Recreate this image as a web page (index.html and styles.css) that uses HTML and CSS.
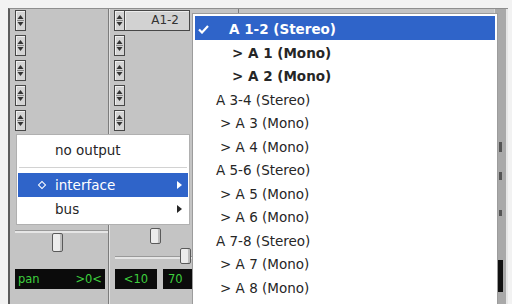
FILE: index.html
```html
<!DOCTYPE html>
<html>
<head>
<meta charset="utf-8">
<link rel="stylesheet" href="styles.css">
</head>
<body>
<div class="screen">
  <div class="mixer">
    <div class="strip s1">
      <div class="btns">
        <div class="ud"><svg width="7" height="15" viewBox="0 0 7 15"><path d="M0.5 6 L3.5 2 L6.5 6 Z M0.5 9 L3.5 13 L6.5 9 Z" fill="#333"/><path d="M0 7.5 H7" stroke="#888" stroke-width="1"/></svg></div>
        <div class="ud"><svg width="7" height="15" viewBox="0 0 7 15"><path d="M0.5 6 L3.5 2 L6.5 6 Z M0.5 9 L3.5 13 L6.5 9 Z" fill="#333"/><path d="M0 7.5 H7" stroke="#888" stroke-width="1"/></svg></div>
        <div class="ud"><svg width="7" height="15" viewBox="0 0 7 15"><path d="M0.5 6 L3.5 2 L6.5 6 Z M0.5 9 L3.5 13 L6.5 9 Z" fill="#333"/><path d="M0 7.5 H7" stroke="#888" stroke-width="1"/></svg></div>
        <div class="ud"><svg width="7" height="15" viewBox="0 0 7 15"><path d="M0.5 6 L3.5 2 L6.5 6 Z M0.5 9 L3.5 13 L6.5 9 Z" fill="#333"/><path d="M0 7.5 H7" stroke="#888" stroke-width="1"/></svg></div>
        <div class="ud"><svg width="7" height="15" viewBox="0 0 7 15"><path d="M0.5 6 L3.5 2 L6.5 6 Z M0.5 9 L3.5 13 L6.5 9 Z" fill="#333"/><path d="M0 7.5 H7" stroke="#888" stroke-width="1"/></svg></div>
      </div>
      <div class="bottom">
        <div class="faders">
          <div class="track t1"></div>
          <div class="thumb th-a"></div>
        </div>
        <div class="lcds">
          <div class="lcd wide"><span>pan</span><span>&gt;0&lt;</span></div>
        </div>
      </div>
    </div>
    <div class="strip s2">
      <div class="btns">
        <div class="toprow">
          <div class="ud"><svg width="7" height="15" viewBox="0 0 7 15"><path d="M0.5 6 L3.5 2 L6.5 6 Z M0.5 9 L3.5 13 L6.5 9 Z" fill="#333"/><path d="M0 7.5 H7" stroke="#888" stroke-width="1"/></svg></div>
          <div class="label">A1-2</div>
        </div>
        <div class="ud"><svg width="7" height="15" viewBox="0 0 7 15"><path d="M0.5 6 L3.5 2 L6.5 6 Z M0.5 9 L3.5 13 L6.5 9 Z" fill="#333"/><path d="M0 7.5 H7" stroke="#888" stroke-width="1"/></svg></div>
        <div class="ud"><svg width="7" height="15" viewBox="0 0 7 15"><path d="M0.5 6 L3.5 2 L6.5 6 Z M0.5 9 L3.5 13 L6.5 9 Z" fill="#333"/><path d="M0 7.5 H7" stroke="#888" stroke-width="1"/></svg></div>
        <div class="ud"><svg width="7" height="15" viewBox="0 0 7 15"><path d="M0.5 6 L3.5 2 L6.5 6 Z M0.5 9 L3.5 13 L6.5 9 Z" fill="#333"/><path d="M0 7.5 H7" stroke="#888" stroke-width="1"/></svg></div>
        <div class="ud"><svg width="7" height="15" viewBox="0 0 7 15"><path d="M0.5 6 L3.5 2 L6.5 6 Z M0.5 9 L3.5 13 L6.5 9 Z" fill="#333"/><path d="M0 7.5 H7" stroke="#888" stroke-width="1"/></svg></div>
      </div>
      <div class="bottom">
        <div class="faders">
          <div class="track t2"></div>
          <div class="thumb th-b"></div>
          <div class="thumb th-c"></div>
        </div>
        <div class="lcds">
          <div class="lcd small"><span>&lt;10</span></div>
          <div class="lcd small left"><span>70</span></div>
        </div>
      </div>
    </div>
    <div class="strip s3"></div>
    <div class="vbar">
      <div class="mk m-a"></div>
      <div class="mk m-b"></div>
      <div class="mk m-c"></div>
      <div class="mk m-d"></div>
    </div>
  </div>

  <div class="menu m1">
    <div class="mi"><span class="mark"></span><span class="txt">no output</span></div>
    <div class="sep"></div>
    <div class="mi hl"><span class="mark"><span class="dia"></span></span><span class="txt">interface</span><span class="arr"></span></div>
    <div class="mi"><span class="mark"></span><span class="txt">bus</span><span class="arr"></span></div>
  </div>

  <div class="menu m2">
    <div class="row hl bold sel"><span class="chk"><svg width="11" height="9" viewBox="0 0 11 9"><path d="M1 4.5 L4 7.5 L10 1" fill="none" stroke="#fff" stroke-width="2.2"/></svg></span>A 1-2 (Stereo)</div>
    <div class="row bold mono">&gt; A 1 (Mono)</div>
    <div class="row bold mono">&gt; A 2 (Mono)</div>
    <div class="row st">A 3-4 (Stereo)</div>
    <div class="row mn">&gt; A 3 (Mono)</div>
    <div class="row mn">&gt; A 4 (Mono)</div>
    <div class="row st">A 5-6 (Stereo)</div>
    <div class="row mn">&gt; A 5 (Mono)</div>
    <div class="row mn">&gt; A 6 (Mono)</div>
    <div class="row st">A 7-8 (Stereo)</div>
    <div class="row mn">&gt; A 7 (Mono)</div>
    <div class="row mn">&gt; A 8 (Mono)</div>
  </div>
</div>
</body>
</html>
```

FILE: styles.css
```css
html, body {
  margin: 0;
  padding: 0;
}
body {
  width: 512px;
  height: 304px;
  overflow: hidden;
  background: #f2f2f2;
  font-family: "DejaVu Sans", "Liberation Sans", sans-serif;
}
.screen {
  position: relative;
  width: 512px;
  height: 304px;
  box-sizing: border-box;
  padding: 8px 4px 0 8px;
}
.mixer {
  display: flex;
  height: 296px;
  background: #c4c4c4;
  border-left: 2px solid #5c5c5c;
  border-top: 1px solid #8e8e8e;
}
.strip {
  display: flex;
  flex-direction: column;
  box-sizing: border-box;
  height: 100%;
}
.s1 {
  width: 99px;
  border-right: 1px solid #7c7c7c;
}
.s2 {
  width: 130px;
  border-left: 1px solid #e2e2e2;
  border-right: 1px solid #7c7c7c;
}
.s3 {
  flex: 1;
}
.btns {
  display: flex;
  flex-direction: column;
  align-items: flex-start;
  gap: 4px;
  padding: 1px 0 0 5px;
}
.s2 .btns {
  padding-left: 4px;
}
.ud {
  width: 11px;
  height: 21px;
  box-sizing: border-box;
  border: 1px solid #474747;
  background: #d4d4d4;
  box-shadow: inset 1px 1px 0 #f0f0f0;
  display: flex;
  align-items: center;
  justify-content: center;
}
.toprow {
  display: flex;
}
.label {
  width: 65px;
  height: 21px;
  box-sizing: border-box;
  border: 1px solid #474747;
  border-left: none;
  background: #d2d2d2;
  box-shadow: inset 1px 1px 0 #ececec;
  font-size: 12px;
  line-height: 19px;
  color: #333;
  text-align: right;
  padding-right: 10px;
}
.bottom {
  margin-top: auto;
  padding: 0 0 16px 5px;
}
.faders {
  position: relative;
  height: 40px;
  margin-bottom: 2px;
}
.track {
  position: absolute;
  left: 0;
  right: 0;
  height: 2px;
  background: #e6e6e6;
  border-top: 1px solid #9a9a9a;
}
.t1 { top: 3px; }
.t2 { top: 29px; right: -4px; }
.thumb {
  position: absolute;
  width: 11px;
  box-sizing: border-box;
  border: 1px solid #5a5a5a;
  border-radius: 2px;
  background: #ececec;
  box-shadow: inset -2px 0 0 #bdbdbd;
}
.th-a { left: 37px; top: 6px; height: 19px; }
.th-b { left: 35px; top: 1px; height: 16px; }
.th-c { left: 65px; top: 21px; height: 16px; }
.lcds {
  display: flex;
  gap: 6px;
}
.lcd {
  height: 20px;
  box-sizing: border-box;
  background: #0b0b0b;
  color: #3ecf3e;
  font-size: 11.5px;
  line-height: 20px;
  display: flex;
  justify-content: space-between;
  padding: 0 3px;
}
.lcd.wide { width: 90px; }
.lcd.small { width: 42px; justify-content: center; }
.lcd.small.left { justify-content: flex-start; padding-left: 5px; }
.vbar {
  width: 11px;
  display: flex;
  flex-direction: column;
  align-items: center;
  background: #a9a9a9;
  border-left: 1px solid #d6d6d6;
  border-right: 2px solid #e6e6e6;
}
.mk {
  width: 3px;
  background: #555;
}
.m-a { margin-top: 133px; height: 10px; }
.m-b { margin-top: 20px; height: 8px; }
.m-c { margin-top: 30px; height: 6px; }
.m-d { margin-top: 44px; height: 32px; background: #111; width: 5px; }

/* menus */
.menu {
  position: absolute;
  background: #fff;
  box-sizing: border-box;
  color: #262626;
}
.m1 {
  left: 16px;
  top: 134px;
  width: 174px;
  border: 1px solid #b0b0b0;
  padding: 3px 1px;
  font-size: 13.5px;
}
.mi {
  display: flex;
  align-items: center;
  height: 24px;
  padding-right: 6px;
}
.mark {
  width: 37px;
  flex: none;
  display: flex;
  align-items: center;
  padding-left: 21px;
  box-sizing: border-box;
}
.dia {
  width: 4px;
  height: 4px;
  border: 1px solid #fff;
  transform: rotate(45deg);
}
.txt {
  flex: 1;
}
.arr {
  width: 0;
  height: 0;
  border-left: 5px solid currentColor;
  border-top: 4px solid transparent;
  border-bottom: 4px solid transparent;
}
.sep {
  height: 1px;
  background: #d2d2d2;
  margin: 5px 1px;
}
.hl {
  background: #2f64c9;
  color: #fff;
}
.m2 {
  left: 192px;
  top: 13px;
  width: 306px;
  height: 300px;
  border: 1px solid #9c9c9c;
  padding: 2px 2px 0;
  font-size: 13.5px;
}
.row {
  display: flex;
  align-items: center;
  height: 23.5px;
  box-sizing: border-box;
  padding-top: 3px;
  white-space: pre;
}
.bold { font-weight: bold; }
.chk {
  width: 34px;
  flex: none;
  display: flex;
  padding-left: 3px;
  box-sizing: border-box;
}
.mono { padding-left: 37px; }
.st { padding-left: 21px; }
.mn { padding-left: 25px; }
```
